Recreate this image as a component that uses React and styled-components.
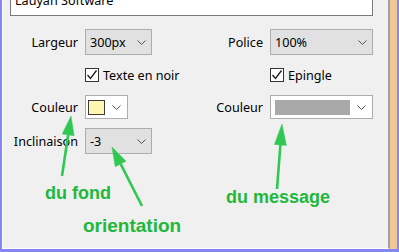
import React from 'react';
import styled, { createGlobalStyle } from 'styled-components';

const GlobalStyle = createGlobalStyle`
  html, body {
    margin: 0;
    padding: 0;
    background: #f0f0f0;
  }
  * {
    box-sizing: border-box;
  }
`;

const Page = styled.div`
  position: relative;
  width: 399px;
  height: 252px;
  overflow: hidden;
  font-family: 'Noto Sans', 'Open Sans', sans-serif;
  font-size: 12.6px;
  color: #000;
`;

const Frame = styled.div`
  display: flex;
  width: 100%;
  height: 100%;
  border-left: 2px solid #8585f5;
  border-right: 2px solid #8585f5;
  border-bottom: 3px solid #8585f5;
`;

const Panel = styled.div`
  flex: 1;
  background: #f0f0f0;
  border-left: 1px solid #ffffff;
  border-bottom: 1px solid #ffffff;
  border-right: 2px solid #a0a0a0;
  padding-right: 15px;
`;

const Strip = styled.div`
  width: 7px;
  background: #f0c896;
`;

const TextField = styled.div`
  height: 25px;
  margin: -9px 0 0 7px;
  padding: 0 4px 6px;
  display: flex;
  align-items: center;
  background: #fff;
  border: 1px solid #7a7a7a;
  white-space: nowrap;
`;

const Form = styled.div`
  display: grid;
  grid-template-columns: 75px 100px 71px 103px;
  grid-template-rows: 26px 22px 24px 26px;
  column-gap: 7px;
  row-gap: 9px;
  margin-top: 13px;
  align-items: center;
`;

const Label = styled.div`
  grid-column: ${({ $col }) => $col};
  text-align: right;
  white-space: nowrap;
`;

const Select = styled.div`
  grid-column: ${({ $col }) => $col};
  width: ${({ $width }) => ($width ? `${$width}px` : '100%')};
  height: 26px;
  display: flex;
  align-items: center;
  justify-content: space-between;
  padding: 0 5px 0 4px;
  background: #e1e1e1;
  border: 1px solid #adadad;
`;

const ColorSelect = styled.div`
  grid-column: ${({ $col }) => $col};
  width: ${({ $width }) => ($width ? `${$width}px` : '100%')};
  height: 24px;
  display: flex;
  align-items: center;
  justify-content: space-between;
  padding: 0 6px 0 ${({ $pad }) => $pad}px;
  background: #fff;
  border: 1px solid #adadad;
`;

const Swatch = styled.div`
  width: ${({ $width }) => $width}px;
  height: 15px;
  background: ${({ $color }) => $color};
  border: ${({ $framed }) => ($framed ? '1px solid #3c3c3c' : 'none')};
`;

const Check = styled.label`
  grid-column: ${({ $col }) => $col};
  display: flex;
  align-items: center;
  gap: 4px;
  white-space: nowrap;
`;

const Box = styled.span`
  width: 14px;
  height: 14px;
  display: flex;
  align-items: center;
  justify-content: center;
  background: #fff;
  border: 1px solid #333;
`;

const Overlay = styled.svg`
  position: absolute;
  left: 0;
  top: 0;
  pointer-events: none;
`;

const Callout = styled.div`
  position: absolute;
  left: ${({ $x }) => $x}px;
  top: ${({ $y }) => $y}px;
  font-family: 'Liberation Sans', Arial, sans-serif;
  font-weight: bold;
  font-size: ${({ $size }) => $size}px;
  line-height: 1;
  color: #1fb83c;
  white-space: nowrap;
`;

const Chevron = () => (
  <svg width='9' height='5' viewBox='0 0 9 5'>
    <polyline points='0.5,0.5 4.5,4.5 8.5,0.5' fill='none' stroke='#555' strokeWidth='1' />
  </svg>
);

const Tick = () => (
  <svg width='12' height='12' viewBox='0 0 12 12'>
    <polyline points='1.5,6 4.5,9.5 10.5,1.5' fill='none' stroke='#222' strokeWidth='1.4' />
  </svg>
);

const Arrow = ({ from, to, len = 19, half = 6 }) => {
  const dx = from[0] - to[0];
  const dy = from[1] - to[1];
  const d = Math.hypot(dx, dy);
  const ux = dx / d;
  const uy = dy / d;
  const bx = to[0] + ux * len;
  const by = to[1] + uy * len;
  const px = -uy * half;
  const py = ux * half;
  const head = `${to[0]},${to[1]} ${bx + px},${by + py} ${bx - px},${by - py}`;
  return (
    <g fill='#30c852' stroke='#30c852'>
      <line x1={from[0]} y1={from[1]} x2={bx} y2={by} strokeWidth='2.6' />
      <polygon points={head} strokeWidth='0.5' />
    </g>
  );
};

export default function App() {
  return (
    <Page>
      <GlobalStyle />
      <Frame>
        <Panel>
          <TextField>Lauyan Software</TextField>
          <Form>
            <Label $col={1}>Largeur</Label>
            <Select $col={2} $width={67}>
              300px <Chevron />
            </Select>
            <Label $col={3}>Police</Label>
            <Select $col={4}>
              100% <Chevron />
            </Select>

            <Check $col={2}>
              <Box><Tick /></Box>
              Texte en noir
            </Check>
            <Check $col={4}>
              <Box><Tick /></Box>
              Epingle
            </Check>

            <Label $col={1}>Couleur</Label>
            <ColorSelect $col={2} $width={43} $pad={2}>
              <Swatch $width={17} $color='#fff6b0' $framed />
              <Chevron />
            </ColorSelect>
            <Label $col={3}>Couleur</Label>
            <ColorSelect $col={4} $pad={4}>
              <Swatch $width={75} $color='#a9a9a9' />
              <Chevron />
            </ColorSelect>

            <Label $col={1}>Inclinaison</Label>
            <Select $col={2} $width={67}>
              -3 <Chevron />
            </Select>
          </Form>
        </Panel>
        <Strip />
      </Frame>

      <Overlay width='399' height='252'>
        <Arrow from={[62, 176]} to={[71, 116]} />
        <Arrow from={[142, 206]} to={[112, 147]} />
        <Arrow from={[277, 189]} to={[282, 124]} len={21} />
      </Overlay>
      <Callout $x={45} $y={184} $size={18}>du fond</Callout>
      <Callout $x={83} $y={216} $size={19}>orientation</Callout>
      <Callout $x={226} $y={188} $size={18}>du message</Callout>
    </Page>
  );
}
